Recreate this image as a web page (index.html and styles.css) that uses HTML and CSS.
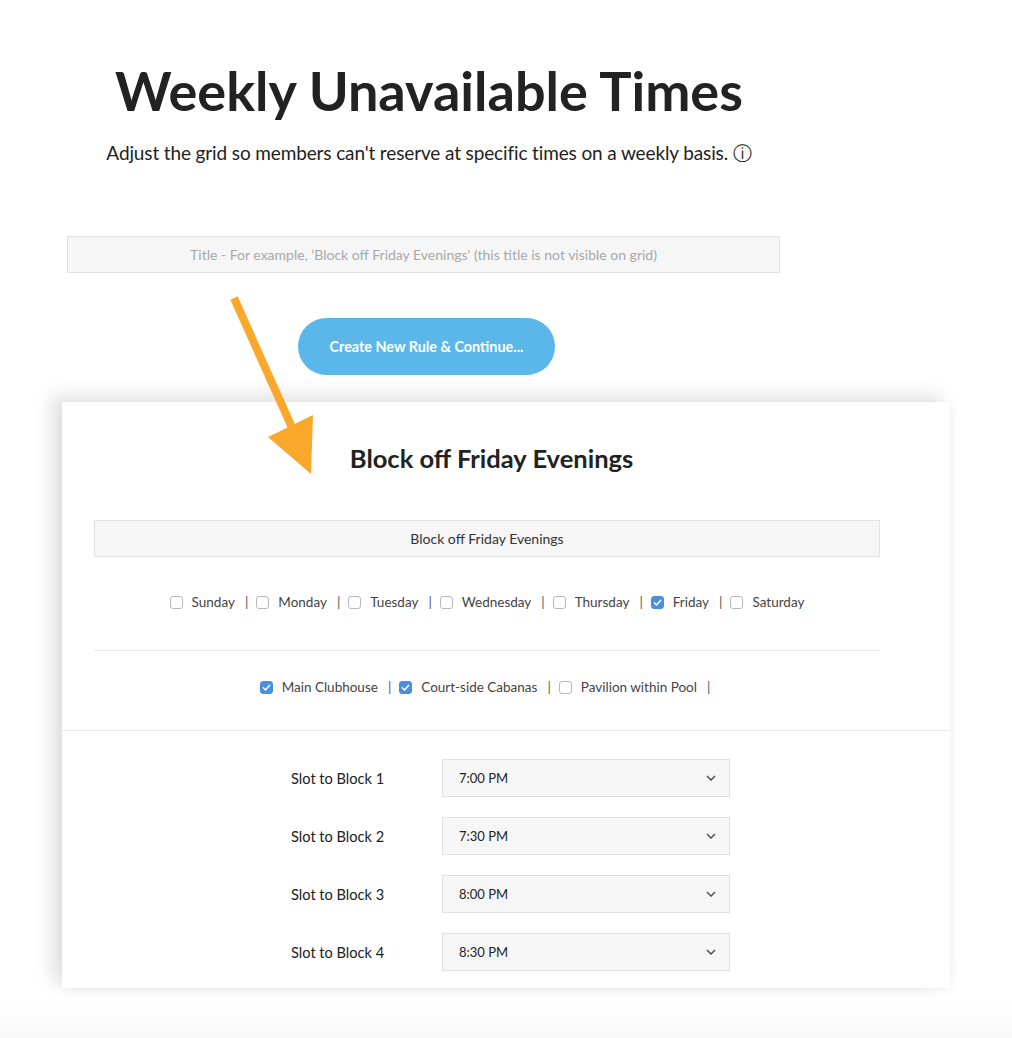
FILE: index.html
```html
<!DOCTYPE html>
<html>
<head>
<meta charset="utf-8">
<link rel="stylesheet" href="styles.css">
</head>
<body>
<div class="page">
  <header class="intro">
    <h1 class="title">Weekly Unavailable Times</h1>
    <p class="subtitle">Adjust the grid so members can't reserve at specific times on a weekly basis. <span class="info">ⓘ</span></p>
    <div class="title-input">Title - For example, 'Block off Friday Evenings' (this title is not visible on grid)</div>
    <div class="btn-row"><button class="create-btn">Create New Rule &amp; Continue...</button></div>
  </header>

  <section class="card">
    <div class="card-top">
      <h2 class="card-title">Block off Friday Evenings</h2>
      <div class="card-input">Block off Friday Evenings</div>
      <div class="check-row days">
        <span class="item"><span class="cb"></span><span class="lbl">Sunday</span></span><span class="sep">|</span>
        <span class="item"><span class="cb"></span><span class="lbl">Monday</span></span><span class="sep">|</span>
        <span class="item"><span class="cb"></span><span class="lbl">Tuesday</span></span><span class="sep">|</span>
        <span class="item"><span class="cb"></span><span class="lbl">Wednesday</span></span><span class="sep">|</span>
        <span class="item"><span class="cb"></span><span class="lbl">Thursday</span></span><span class="sep">|</span>
        <span class="item"><span class="cb checked"><svg viewBox="0 0 13 13" width="13" height="13"><path d="M3.3 6.8 L5.5 9 L9.7 4.3" fill="none" stroke="#fff" stroke-width="1.5" stroke-linecap="round" stroke-linejoin="round"/></svg></span><span class="lbl">Friday</span></span><span class="sep">|</span>
        <span class="item"><span class="cb"></span><span class="lbl">Saturday</span></span>
      </div>
      <div class="divider"></div>
      <div class="check-row amenities">
        <span class="item"><span class="cb checked"><svg viewBox="0 0 13 13" width="13" height="13"><path d="M3.3 6.8 L5.5 9 L9.7 4.3" fill="none" stroke="#fff" stroke-width="1.5" stroke-linecap="round" stroke-linejoin="round"/></svg></span><span class="lbl">Main Clubhouse</span></span><span class="sep">|</span>
        <span class="item"><span class="cb checked"><svg viewBox="0 0 13 13" width="13" height="13"><path d="M3.3 6.8 L5.5 9 L9.7 4.3" fill="none" stroke="#fff" stroke-width="1.5" stroke-linecap="round" stroke-linejoin="round"/></svg></span><span class="lbl">Court-side Cabanas</span></span><span class="sep">|</span>
        <span class="item"><span class="cb"></span><span class="lbl">Pavilion within Pool</span></span><span class="sep">|</span>
      </div>
    </div>
    <div class="slots">
      <div class="slot"><span class="slot-label">Slot to Block 1</span><div class="select"><span>7:00 PM</span><svg class="chev" viewBox="0 0 10 6" width="10" height="6"><path d="M1 1 L5 5 L9 1" fill="none" stroke="#555" stroke-width="1.6"/></svg></div></div>
      <div class="slot"><span class="slot-label">Slot to Block 2</span><div class="select"><span>7:30 PM</span><svg class="chev" viewBox="0 0 10 6" width="10" height="6"><path d="M1 1 L5 5 L9 1" fill="none" stroke="#555" stroke-width="1.6"/></svg></div></div>
      <div class="slot"><span class="slot-label">Slot to Block 3</span><div class="select"><span>8:00 PM</span><svg class="chev" viewBox="0 0 10 6" width="10" height="6"><path d="M1 1 L5 5 L9 1" fill="none" stroke="#555" stroke-width="1.6"/></svg></div></div>
      <div class="slot"><span class="slot-label">Slot to Block 4</span><div class="select"><span>8:30 PM</span><svg class="chev" viewBox="0 0 10 6" width="10" height="6"><path d="M1 1 L5 5 L9 1" fill="none" stroke="#555" stroke-width="1.6"/></svg></div></div>
    </div>
  </section>

  <svg class="arrow" viewBox="0 0 1012 1038" width="1012" height="1038">
    <line x1="234" y1="298" x2="294" y2="432" stroke="#f9a82b" stroke-width="8"/>
    <polygon points="268,437 313,415 311,474" fill="#f9a82b"/>
  </svg>
</div>
</body>
</html>
```

FILE: styles.css
```css
html, body {
  margin: 0;
  padding: 0;
}
body {
  background: linear-gradient(to bottom, #ffffff 0, #ffffff 1000px, #f8f8f8 1038px);
  font-family: Lato, "Liberation Sans", sans-serif;
  color: #222;
  width: 1012px;
  height: 1038px;
  overflow: hidden;
}
.page {
  position: relative;
  width: 1012px;
  height: 1038px;
}
.intro {
  width: 858px;
  display: flex;
  flex-direction: column;
  align-items: center;
}
.title {
  margin: 59px 0 0;
  font-size: 54px;
  line-height: 64px;
  font-weight: 700;
  color: #222;
}
.subtitle {
  margin: 18px 0 0;
  font-size: 19px;
  letter-spacing: -0.13px;
  line-height: 24px;
  color: #222;
}
.info {
  font-family: "DejaVu Sans", sans-serif;
  font-size: 19px;
}
.title-input {
  margin: 71px 0 0 67px;
  align-self: flex-start;
  box-sizing: border-box;
  width: 713px;
  height: 37px;
  background: #f6f6f6;
  border: 1px solid #e2e2e2;
  color: #a8a8a8;
  font-size: 14px;
  display: flex;
  align-items: center;
  justify-content: center;
}
.btn-row {
  margin-top: 45px;
  width: 100%;
  display: flex;
  justify-content: center;
}
.create-btn {
  width: 257px;
  height: 57px;
  border: none;
  border-radius: 29px;
  background: #5bb7ea;
  color: #fff;
  font-family: Lato, "Liberation Sans", sans-serif;
  font-weight: 700;
  font-size: 14.4px;
  margin-left: -5px;
}
.card {
  margin: 27px 0 0 62px;
  width: 888px;
  height: 586px;
  box-sizing: border-box;
  background: #fff;
  box-shadow: -10px -6px 18px rgba(0,0,0,0.13), 2px 3px 8px rgba(0,0,0,0.04);
  display: flex;
  flex-direction: column;
}
.card-top {
  padding: 41px 0 33px 32px;
  width: 786px;
  display: flex;
  flex-direction: column;
  align-items: center;
}
.card-title {
  margin: 0;
  font-size: 25.5px;
  line-height: 30px;
  font-weight: 700;
  color: #222;
  padding-left: 9px;
}
.card-input {
  margin-top: 47px;
  box-sizing: border-box;
  width: 786px;
  height: 37px;
  background: #f6f6f6;
  border: 1px solid #e2e2e2;
  color: #333;
  font-size: 14px;
  display: flex;
  align-items: center;
  justify-content: center;
}
.check-row {
  display: flex;
  align-items: center;
  height: 20px;
  font-size: 13.5px;
  color: #444;
}
.days {
  margin-top: 35px;
}
.amenities {
  margin-top: 26px;
  padding-left: 4px;
}
.item {
  display: flex;
  align-items: center;
}
.cb {
  box-sizing: border-box;
  width: 13px;
  height: 13px;
  border: 1px solid #b8b8b8;
  border-radius: 3px;
  background: #fff;
  display: inline-flex;
}
.cb.checked {
  background: #4a8fdc;
  border-color: #4a8fdc;
}
.cb.checked svg {
  margin: -1px;
}
.lbl {
  margin-left: 9px;
}
.sep {
  margin: 0 8px 0 10px;
  color: #555;
}
.divider {
  margin-top: 38px;
  width: 786px;
  height: 1px;
  background: #ececec;
}
.slots {
  border-top: 1px solid #e8e8e8;
  padding: 28px 0 0 229px;
  display: flex;
  flex-direction: column;
  gap: 20px;
}
.slot {
  display: flex;
  align-items: center;
}
.slot-label {
  width: 151px;
  font-size: 14.6px;
  color: #222;
}
.select {
  box-sizing: border-box;
  width: 288px;
  height: 38px;
  background: #f6f6f6;
  border: 1px solid #e0e0e0;
  display: flex;
  align-items: center;
  justify-content: space-between;
  padding: 0 13px 0 16px;
  font-size: 13px;
  color: #222;
}
.arrow {
  position: absolute;
  left: 0;
  top: 0;
  pointer-events: none;
}
```
